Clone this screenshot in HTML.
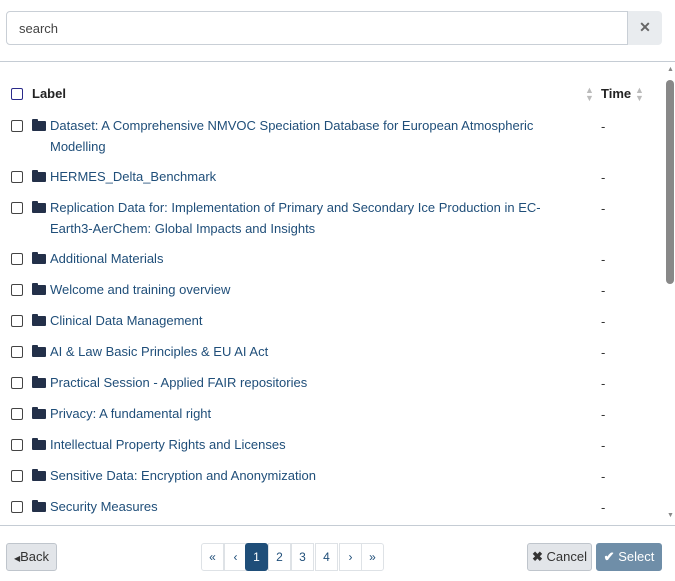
<!DOCTYPE html>
<html><head><style>
*{box-sizing:border-box;margin:0;padding:0}
body{width:675px;height:581px;overflow:hidden;background:#fff;font-family:"Liberation Sans Narrow","Liberation Sans",sans-serif;font-size:13px;color:#1f4e79;position:relative}
.search{position:absolute;left:6px;top:11px;width:622px;height:34px;border:1px solid #c9cfd6;border-radius:4px 0 0 4px;padding:9px 12px;color:#444;font-size:13px}
.clr{position:absolute;left:628px;top:11px;width:34px;height:34px;background:#e9ecef;border-radius:0 4px 4px 0;color:#666;font-size:14px;font-weight:bold;text-align:center;line-height:33px}
.hr{position:absolute;left:0;width:675px;height:1px;background:#c5ccd4}
.cb{position:absolute;left:11px;width:12px;height:12px;border:1.5px solid #444;border-radius:2px}
.fold{position:absolute;left:32px;width:14px;height:10px;background:#233049;border-radius:1px}
.fold:before{content:"";position:absolute;left:0;top:-2px;width:6px;height:3px;background:#233049;border-radius:1px 1px 0 0}
.t{position:absolute;left:50px;line-height:21px;color:#1f4e79;width:518px}
.d{position:absolute;left:601px;color:#333}
.sb{position:absolute;left:666px;top:80px;width:8px;height:204px;background:#888;border-radius:4px}
.btn{position:absolute;top:543px;height:28px;border:1px solid #bfc5cc;border-radius:3px;background:#e2e5e9;color:#333;font-size:13px;line-height:26px;text-align:center}
.pg{position:absolute;top:543px;height:28px;width:23px;border:1px solid #dee2e6;background:#fff;color:#1f4e79;font-size:12px;line-height:26px;text-align:center}
</style></head><body>
<div class="search">search</div><div class="clr">✕</div>
<div class="hr" style="top:61px"></div>
<div class="hr" style="top:525px"></div>
<div style="position:absolute;left:667px;top:66px;font-size:7px;color:#888">▲</div>
<div style="position:absolute;left:667px;top:512px;font-size:7px;color:#888">▼</div>
<div class="sb"></div>
<div class="cb" style="top:88px;border-color:#2a2a8a"></div>
<div style="position:absolute;left:32px;top:86px;font-weight:bold;color:#222">Label</div>
<div style="position:absolute;left:585px;top:86px;font-size:9px;color:#bbb;line-height:8px">▲<br>▼</div>
<div style="position:absolute;left:601px;top:86px;font-weight:bold;color:#222">Time</div>
<div style="position:absolute;left:635px;top:86px;font-size:9px;color:#bbb;line-height:8px">▲<br>▼</div>

<div class="cb" style="top:120px"></div><div class="fold" style="top:121px"></div><div class="t" style="top:115px">Dataset: A Comprehensive NMVOC Speciation Database for European Atmospheric Modelling</div><div class="d" style="top:119px">-</div>
<div class="cb" style="top:171px"></div><div class="fold" style="top:172px"></div><div class="t" style="top:166px">HERMES_Delta_Benchmark</div><div class="d" style="top:170px">-</div>
<div class="cb" style="top:202px"></div><div class="fold" style="top:203px"></div><div class="t" style="top:197px">Replication Data for: Implementation of Primary and Secondary Ice Production in EC-Earth3-AerChem: Global Impacts and Insights</div><div class="d" style="top:201px">-</div>
<div class="cb" style="top:253px"></div><div class="fold" style="top:254px"></div><div class="t" style="top:248px">Additional Materials</div><div class="d" style="top:252px">-</div>
<div class="cb" style="top:284px"></div><div class="fold" style="top:285px"></div><div class="t" style="top:279px">Welcome and training overview</div><div class="d" style="top:283px">-</div>
<div class="cb" style="top:315px"></div><div class="fold" style="top:316px"></div><div class="t" style="top:310px">Clinical Data Management</div><div class="d" style="top:314px">-</div>
<div class="cb" style="top:346px"></div><div class="fold" style="top:347px"></div><div class="t" style="top:341px">AI &amp; Law Basic Principles &amp; EU AI Act</div><div class="d" style="top:345px">-</div>
<div class="cb" style="top:377px"></div><div class="fold" style="top:378px"></div><div class="t" style="top:372px">Practical Session - Applied FAIR repositories</div><div class="d" style="top:376px">-</div>
<div class="cb" style="top:408px"></div><div class="fold" style="top:409px"></div><div class="t" style="top:403px">Privacy: A fundamental right</div><div class="d" style="top:407px">-</div>
<div class="cb" style="top:439px"></div><div class="fold" style="top:440px"></div><div class="t" style="top:434px">Intellectual Property Rights and Licenses</div><div class="d" style="top:438px">-</div>
<div class="cb" style="top:470px"></div><div class="fold" style="top:471px"></div><div class="t" style="top:465px">Sensitive Data: Encryption and Anonymization</div><div class="d" style="top:469px">-</div>
<div class="cb" style="top:501px"></div><div class="fold" style="top:502px"></div><div class="t" style="top:496px">Security Measures</div><div class="d" style="top:500px">-</div>

<div class="btn" style="left:6px;width:51px"><span style="font-size:8px">◀</span>Back</div>
<div class="pg" style="left:201px;border-radius:3px 0 0 3px">«</div>
<div class="pg" style="left:224px">‹</div>
<div class="pg" style="left:245px;background:#1f4e79;color:#fff;border-color:#1f4e79;border-radius:3px">1</div>
<div class="pg" style="left:268px">2</div>
<div class="pg" style="left:291px">3</div>
<div class="pg" style="left:315px">4</div>
<div class="pg" style="left:339px">›</div>
<div class="pg" style="left:361px;border-radius:0 3px 3px 0">»</div>
<div class="btn" style="left:527px;width:65px"><b>✖</b> Cancel</div>
<div class="btn" style="left:596px;width:66px;background:#6f8ea8;border-color:#6f8ea8;color:#fff"><b>✔</b> Select</div>
</body></html>
